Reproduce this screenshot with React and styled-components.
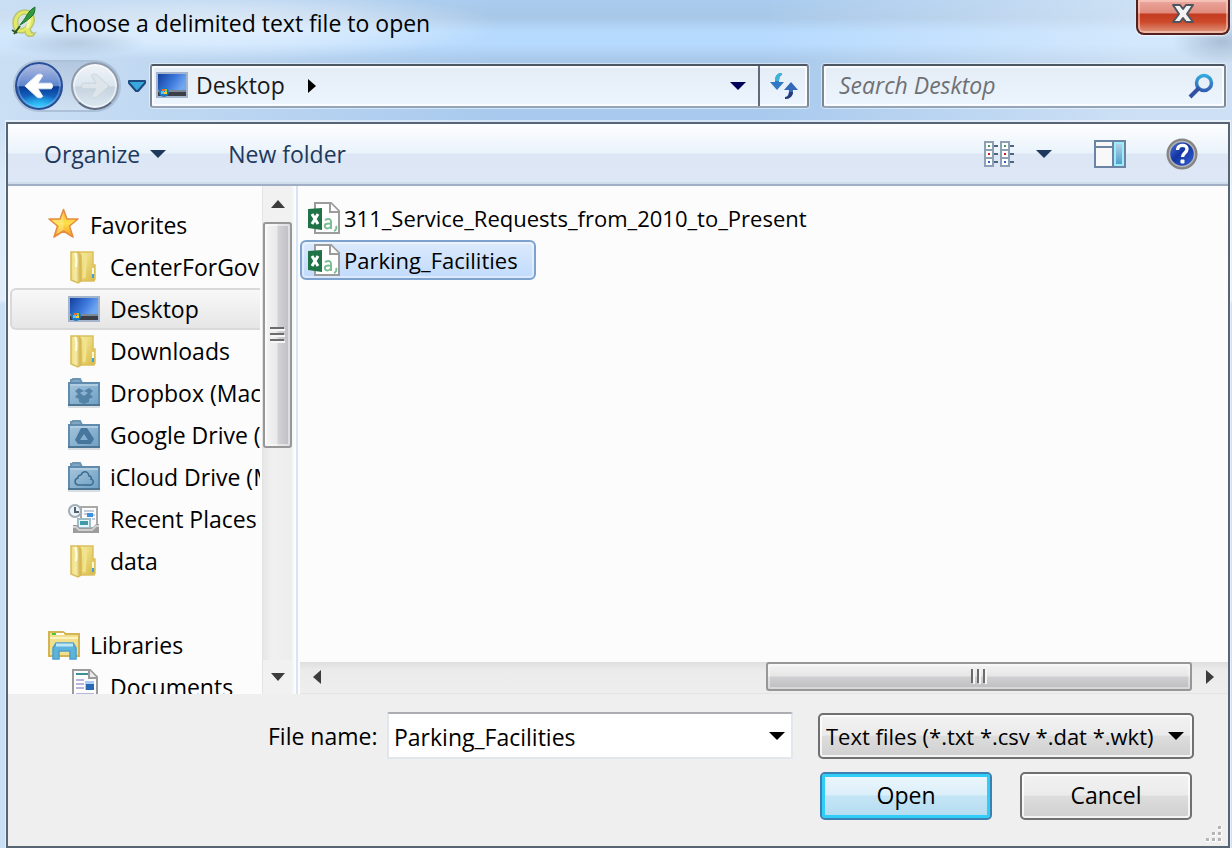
import React, { useState } from 'react';
import styled, { createGlobalStyle, css } from 'styled-components';

const Global = createGlobalStyle`
  *, *::before, *::after { box-sizing: border-box; }
  body { margin: 0; font-family: "Open Sans", "Noto Sans", sans-serif; font-size: 23px; line-height: 30px; color: #000; }
  button, input, select { font: inherit; color: inherit; margin: 0; }
  svg { display: block; flex: none; }
`;

/* ---------- window frame ---------- */

const Window = styled.div`
  height: 100vh;
  display: flex;
  flex-direction: column;
  padding: 0 2px 0 6px;
  overflow: hidden;
  background:
    radial-gradient(ellipse 70px 14px at 76px 43px, rgba(120, 140, 165, 0.3), transparent),
    radial-gradient(ellipse 50px 22px at 1222px 42px, rgba(120, 140, 165, 0.45), transparent),
    radial-gradient(ellipse 260px 34px at 240px 26px, rgba(255, 255, 255, 0.55), rgba(255, 255, 255, 0.3) 55%, transparent),
    linear-gradient(90deg, rgba(230, 240, 250, 0.55), transparent 40%, transparent 62%, rgba(240, 246, 252, 0.5) 92%),
    linear-gradient(180deg, #a9cbee 0, #a9c8e8 18px, #b6dafe 32px, #b6dafe 44px, #a9c9eb 60px, #a9caee 120px, #cfe3f8 180px, #dbe9f8 300px, #a9c9ec 304px, #a9c9ec 100%);
`;

const TitleBar = styled.header`
  display: flex;
  align-items: flex-start;
  height: 64px;
`;

const Title = styled.h1`
  flex: 1;
  display: flex;
  align-items: center;
  gap: 12px;
  height: 46px;
  margin: 0;
  padding-left: 4px;
  font-size: 23px;
  font-weight: 400;
`;

const CloseButton = styled.button`
  width: 94px;
  height: 35px;
  display: flex;
  justify-content: center;
  padding: 2px 0 0;
  border: 2px solid #54201f;
  border-top: 0;
  border-radius: 0 0 8px 8px;
  box-shadow: inset 0 0 0 2px rgba(255, 220, 210, 0.5), 0 1px 2px rgba(255, 255, 255, 0.8);
  background: linear-gradient(180deg, #eca89f 0, #e08a7c 13px, #c33a20 14px, #cd4a2c 22px, #e09a80 100%);
`;

const NavBar = styled.div`
  display: flex;
  align-items: center;
  height: 44px;
  margin-bottom: 14px;
  padding-right: 4px;
`;

const History = styled.div`
  display: flex;
  align-items: center;
  gap: 8px;
  width: 144px;
  flex: none;
  padding-left: 9px;
`;

const HistoryPair = styled.div`
  display: flex;
  gap: 8px;
  border-radius: 24px;
  box-shadow: 0 0 0 2px rgba(140, 160, 185, 0.45);
  background: linear-gradient(180deg, rgba(160, 180, 205, 0.5), rgba(215, 228, 242, 0.6));
`;

const RoundButton = styled.button`
  width: 48px;
  height: 48px;
  display: grid;
  place-items: center;
  padding: 0;
  border-radius: 50%;
  ${(p) =>
    p.$primary
      ? css`
          border: 2px solid #2a4f96;
          box-shadow: inset 0 0 0 2px rgba(150, 185, 235, 0.45);
          background:
            radial-gradient(ellipse 24px 14px at 50% 100%, #35d2ff, transparent),
            linear-gradient(180deg, #b5bde0 0, #5d86cf 49%, #0a3b94 52%, #1569c4 78%, #1fa4ee 100%);
        `
      : css`
          border: 2px solid #8e9aab;
          border-bottom-color: #5e6b80;
          box-shadow: inset 0 0 0 2px rgba(255, 255, 255, 0.5);
          background: linear-gradient(180deg, #f0f4f8 0, #dbe5ee 50%, #c5d3e0 52%, #dde8f0 100%);
        `}
`;

const IconButton = styled.button`
  display: grid;
  place-items: center;
  padding: 0;
  border: 0;
  background: none;
`;

const fieldFrame = css`
  display: flex;
  align-items: center;
  height: 44px;
  border: 2px solid #7c8794;
  border-top-color: #4d5763;
  border-bottom-color: #95a5b8;
  border-radius: 3px;
  box-shadow: 0 0 0 1px rgba(255, 255, 255, 0.45), inset 0 0 0 2px rgba(255, 255, 255, 0.75);
  background: linear-gradient(180deg, #e4ecf6 0, #e8f0f9 45%, #ecf4fe 100%);
`;

const AddressBar = styled.div`
  ${fieldFrame}
  flex: 1;
  min-width: 0;
  margin-right: 13px;
`;

const Crumb = styled.button`
  display: flex;
  align-items: center;
  gap: 8px;
  padding: 0 0 2px 4px;
  border: 0;
  background: none;
  color: #1a1a1a;
`;

const CrumbArrow = styled(IconButton)`
  width: 54px;
  height: 40px;
`;

const Spacer = styled.span`
  flex: 1;
`;

const AddressDrop = styled(IconButton)`
  width: 40px;
  height: 40px;
`;

const Refresh = styled(IconButton)`
  width: 49px;
  height: 40px;
  border-left: 2px solid #5f6b78;
`;

const SearchBox = styled.label`
  ${fieldFrame}
  flex: 0 1 404px;
  padding-right: 10px;
`;

const SearchInput = styled.input`
  flex: 1;
  min-width: 0;
  height: 38px;
  padding: 0 0 2px 15px;
  border: 0;
  outline: 0;
  background: none;
  &::placeholder {
    color: #6f7073;
    font-style: italic;
    opacity: 1;
  }
`;

/* ---------- client area ---------- */

const Client = styled.div`
  flex: 1;
  min-height: 0;
  display: flex;
  flex-direction: column;
  border: 2px solid #566474;
  box-shadow: 0 -1px 0 1px rgba(255, 255, 255, 0.5);
  background: #efefef;
`;

const Toolbar = styled.div`
  display: flex;
  align-items: center;
  height: 62px;
  flex: none;
  padding: 0 30px 0 36px;
  border-bottom: 2px solid #a0afc5;
  box-shadow: inset 0 -2px 0 #cfdcec;
  background: linear-gradient(180deg, #fdfeff 0, #eaf3fb 29px, #dce6f4 30px, #dde7f5 100%);
  color: #1e395b;
`;

const ToolButton = styled.button`
  display: flex;
  align-items: center;
  gap: 10px;
  padding: 0;
  margin-right: ${(p) => p.$after}px;
  border: 0;
  background: none;
`;

const Browser = styled.div`
  flex: 1;
  min-height: 0;
  display: flex;
  background: #fcfcfc;
`;

const Sidebar = styled.nav`
  width: 252px;
  flex: none;
  overflow: hidden;
  padding: 18px 0 0 2px;
`;

const Tree = styled.ul`
  list-style: none;
  margin: 0;
  padding: 0;
`;

const TreeGap = styled.li`
  height: 42px;
`;

const TreeLink = styled.a`
  display: flex;
  align-items: center;
  gap: 10px;
  height: 42px;
  padding-left: ${(p) => (p.$root ? 36 : 56)}px;
  border: 2px solid transparent;
  border-right: 0;
  border-radius: 6px 0 0 6px;
  color: #000;
  text-decoration: none;
  white-space: nowrap;
  ${(p) =>
    p.$selected &&
    css`
      border-color: #d9d9d9;
      background: linear-gradient(180deg, #f8f8f8, #e6e6e6);
    `}
`;

const VScroll = styled.div`
  display: flex;
  flex-direction: column;
  width: 32px;
  margin-left: 2px;
  flex: none;
  border-left: 1px solid #e3e3e3;
  border-right: 2px solid #f6f6f6;
  background: linear-gradient(90deg, #e6e6e6, #f0f0f0 30%, #ededed);
`;

const VButton = styled(IconButton)`
  height: ${(p) => p.$size}px;
  background: #f1f1f1;
`;

const VThumb = styled.div`
  flex: 222 1 0;
  display: grid;
  place-items: center;
  border: 2px solid #979797;
  border-radius: 3px;
  box-shadow: inset 0 0 0 2px rgba(255, 255, 255, 0.5);
  background: linear-gradient(90deg, #f5f5f5, #e9e9eb 48%, #d3d3d7 52%, #bcbcc2);
`;

const VTrack = styled.div`
  flex: 212 1 0;
`;

const Files = styled.main`
  flex: 1;
  min-width: 0;
  display: flex;
  flex-direction: column;
  margin-left: 2px;
  border-left: 2px solid #d6e5f5;
`;

const FileList = styled.ul`
  flex: 1;
  list-style: none;
  margin: 0;
  padding: 12px 0 0 2px;
`;

const FileItem = styled.button`
  display: flex;
  align-items: center;
  gap: 4px;
  height: 40px;
  margin-bottom: 2px;
  padding: 0 16px 0 6px;
  font-size: 22px;
  border: 2px solid ${(p) => (p.$selected ? '#7da2ce' : 'transparent')};
  border-radius: 6px;
  box-shadow: ${(p) => (p.$selected ? 'inset 0 0 0 2px rgba(255,255,255,0.4)' : 'none')};
  background: ${(p) => (p.$selected ? 'linear-gradient(180deg, #dceafc, #c1dbfc)' : 'none')};
`;

const HScroll = styled.div`
  display: flex;
  height: 32px;
  margin-left: 2px;
  padding-bottom: 2px;
  border-bottom: 1px solid #e4e4e4;
  background: linear-gradient(180deg, #dedede, #ebebeb 8px, #eee);
`;

const HButton = styled(IconButton)`
  width: ${(p) => p.$size}px;
`;

const HTrack = styled.div`
  flex: 432 1 0;
`;

const HThumb = styled.div`
  flex: 422 1 0;
  display: grid;
  place-items: center;
  border: 2px solid #979797;
  border-radius: 3px;
  box-shadow: inset 0 0 0 2px rgba(255, 255, 255, 0.4);
  background: linear-gradient(180deg, #f4f4f4, #e6e6e7 48%, #d0d0d2 52%, #bdbdc1);
`;

/* ---------- bottom form ---------- */

const Footer = styled.form`
  position: relative;
  flex: none;
  display: flex;
  flex-direction: column;
  gap: 13px;
  padding: 18px 34px 26px 260px;
`;

const FieldRow = styled.div`
  display: flex;
  align-items: center;
`;

const NameLabel = styled.label`
  width: 119px;
  flex: none;
`;

const NameBox = styled.div`
  flex: 1;
  min-width: 0;
  display: flex;
  align-items: center;
  height: 47px;
  margin-right: 25px;
  border: 2px solid #e2e7ee;
  border-top-color: #abadb3;
  border-radius: 2px;
  background: #fff;
`;

const NameInput = styled.input`
  flex: 1;
  min-width: 0;
  height: 42px;
  padding: 2px 0 0 5px;
  border: 0;
  outline: 0;
  background: none;
`;

const NameDrop = styled(IconButton)`
  width: 28px;
  height: 40px;
`;

const raised = css`
  border: 2px solid #707070;
  border-radius: 5px;
  box-shadow: inset 0 0 0 2px rgba(255, 255, 255, 0.75);
  background: linear-gradient(180deg, #f2f2f2 0, #ebebeb 48%, #dddddd 50%, #cfcfcf 100%);
`;

const TypeBox = styled.div`
  ${raised}
  flex: 0 1 376px;
  display: flex;
  align-items: center;
  height: 46px;
  padding-right: 8px;
`;

const TypeSelect = styled.select`
  flex: 1;
  min-width: 0;
  height: 42px;
  padding: 0 0 0 6px;
  appearance: none;
  border: 0;
  outline: 0;
  background: none;
  font-size: 22px;
  white-space: nowrap;
`;

const Actions = styled.div`
  display: flex;
  justify-content: flex-end;
  gap: 28px;
  padding-right: 2px;
`;

const ActionButton = styled.button`
  ${raised}
  width: 172px;
  height: 48px;
  padding: 0 0 2px;
  ${(p) =>
    p.$default &&
    css`
      border-color: #3c7fb1;
      box-shadow: inset 0 0 0 3px #2fcdf8;
      background: linear-gradient(180deg, #edf6fb 0, #dceffa 47%, #c4e5f6 50%, #b3dbf0 100%);
    `}
`;

const SizeGrip = styled.svg`
  position: absolute;
  right: 4px;
  bottom: 2px;
`;

/* ---------- drawings ---------- */

const Triangle = ({ dir = 'down', color = '#000', w = 16, h = 8 }) => {
  const d = {
    down: `M0 0H${w}L${w / 2} ${h}Z`,
    up: `M0 ${h}H${w}L${w / 2} 0Z`,
    right: `M0 0L${w} ${h / 2}L0 ${h}Z`,
    left: `M${w} 0L0 ${h / 2}L${w} ${h}Z`,
  }[dir];
  return (
    <svg width={w} height={h} viewBox={`0 0 ${w} ${h}`} aria-hidden="true">
      <path d={d} fill={color} />
    </svg>
  );
};

const AppIcon = () => (
  <svg width="28" height="34" viewBox="0 0 28 34" aria-hidden="true">
    <path
      d="M15 4C8 4 3 10 3 17c0 6 3 10 8 10 1 0 3 0 4-1 0 3 3 5 8 4l2-3c-3 1-4-1-5-4 3-3 5-7 4-12-1-4-4-7-9-7Z"
      fill="#e2ea63"
      stroke="#b9c27a"
      strokeWidth="1.5"
    />
    <path d="M14 8c-5 1-7 6-6 10 0 3 1 5 3 5 5-1 9-7 8-11 0-3-2-4-5-4Z" fill="#d5e2e6" stroke="#b4c05a" />
    <path d="M18 8c2 3 2 9-1 14" fill="none" stroke="#f6f8a8" strokeWidth="3" />
    <path d="M25 1c-5 3-6 5-8 8-2 4-5 7-7 10 5-3 8-5 11-8 3-2 4-5 4-10Z" fill="#2f9a39" stroke="#1d6e2a" />
    <path d="M2 24l5 3M4 28l6-8" stroke="#2b5724" strokeWidth="2" />
  </svg>
);

const CloseGlyph = () => (
  <svg width="24" height="24" viewBox="0 0 24 24" aria-hidden="true">
    <path d="M2 3h7l3 4 3-4h7l-6 9 6 8h-7l-3-4-3 4H2l6-8Z" fill="#f3f3f3" stroke="#50545f" strokeWidth="2" strokeLinejoin="round" />
  </svg>
);

const ArrowGlyph = ({ right }) => (
  <svg width="32" height="30" viewBox="0 0 34 32" aria-hidden="true">
    <g transform={right ? 'matrix(-1 0 0 1 34 0)' : undefined}>
      <path
        d="M2 16 15 4c2-1 5-1 6 1l-5 8h14c2 1 2 5 0 6H16l5 8c-1 2-4 2-6 1Z"
        fill={right ? '#dde5ea' : '#fff'}
        stroke={right ? '#c6d3dd' : '#e4edf8'}
        strokeLinejoin="round"
      />
    </g>
  </svg>
);

const HistoryArrow = () => (
  <svg width="20" height="14" viewBox="0 0 20 14" aria-hidden="true">
    <path d="M2 2h16v2l-7 8H9L2 4Z" fill="#39a8dc" stroke="#1d4a80" strokeWidth="2" strokeLinejoin="round" />
  </svg>
);

const DesktopIcon = () => (
  <svg width="32" height="28" viewBox="0 0 32 28" aria-hidden="true">
    <defs>
      <linearGradient id="screen" x1="0" y1="0" x2="1" y2="0.4">
        <stop offset="0" stopColor="#12409c" />
        <stop offset="0.6" stopColor="#3d78dc" />
        <stop offset="1" stopColor="#6ea6f0" />
      </linearGradient>
    </defs>
    <path d="M0 1h32v26H0Z" fill="#a3b4cc" />
    <path d="M2 3h28v17H2Z" fill="url(#screen)" />
    <path d="M2 19h28v2H2Z" fill="#7d8795" />
    <path d="M2 21h28v4H2Z" fill="#3c3f45" />
    <circle cx="8" cy="21" r="5" fill="#1d78c4" />
    <path d="M6 18h3v2H6Z" fill="#ef6a3a" />
    <path d="M9 18h2v3H9Z" fill="#8ed04a" />
    <path d="M5 20h3v3H5Z" fill="#59c4f4" />
    <path d="M8 21h3v2H8Z" fill="#fbd33c" />
  </svg>
);

const RefreshIcon = () => (
  <svg width="28" height="28" viewBox="0 0 28 28" aria-hidden="true">
    <path d="M12 1v2c-2 0-3 3-3 7h5l-7 8-7-8h5C5 4 7 1 12 1Z" fill="#3079c4" />
    <path d="M12 1v2c-2 0-3 3-3 6H5c0-5 2-8 7-8Z" fill="#3cb4dc" />
    <path d="M15 27v-2c3 0 4-3 4-7h-5l7-8 7 8h-5c0 6-3 9-8 9Z" fill="#3568b6" />
    <path d="M15 27v-2c3 0 4-2 4-5h4c0 4-3 7-8 7Z" fill="#263c78" />
  </svg>
);

const SearchIcon = () => (
  <svg width="26" height="26" viewBox="0 0 26 26" aria-hidden="true">
    <defs>
      <linearGradient id="lens" x1="0" y1="0" x2="0" y2="1">
        <stop offset="0" stopColor="#33a8dc" />
        <stop offset="1" stopColor="#3560b2" />
      </linearGradient>
    </defs>
    <circle cx="16" cy="10" r="7.5" fill="none" stroke="url(#lens)" strokeWidth="3.5" />
    <path d="M11 15 2 24" stroke="#2f53a0" strokeWidth="4" />
  </svg>
);

const ViewIcon = () => (
  <svg width="32" height="28" viewBox="0 0 32 28" aria-hidden="true">
    {[0, 16].map((x) => (
      <g key={x}>
        {['#3f9a5a', '#cf1f1f', '#2a62c8'].map((c, i) => (
          <g key={c}>
            <rect x={x + 1} y={i * 8 + 2} width="8" height="8" fill="#fff" stroke="#8da0b4" strokeWidth="2" />
            <rect x={x + 4} y={i * 8 + 5} width="2" height="2" fill={c} />
            <rect x={x + 10} y={i * 8 + 5} width="4" height="2" fill="#4e6580" />
          </g>
        ))}
      </g>
    ))}
  </svg>
);

const PaneIcon = () => (
  <svg width="32" height="28" viewBox="0 0 32 28" aria-hidden="true">
    <defs>
      <linearGradient id="pane" x1="0" y1="0" x2="0" y2="1">
        <stop offset="0" stopColor="#b5d4e8" />
        <stop offset="1" stopColor="#4f9dcc" />
      </linearGradient>
    </defs>
    <rect x="1" y="1" width="30" height="26" fill="#f8f8f8" stroke="#6c84a4" strokeWidth="2" />
    <path d="M2 7h17M19 2v24" stroke="#6c84a4" strokeWidth="2" />
    <rect x="21" y="3" width="8" height="22" fill="url(#pane)" stroke="#9cecf8" strokeWidth="2" />
  </svg>
);

const HelpIcon = () => (
  <svg width="32" height="32" viewBox="0 0 32 32" aria-hidden="true">
    <defs>
      <linearGradient id="help" x1="0" y1="0" x2="1" y2="1">
        <stop offset="0" stopColor="#5c7fe0" />
        <stop offset="0.45" stopColor="#1236a2" />
        <stop offset="1" stopColor="#3c66dc" />
      </linearGradient>
    </defs>
    <circle cx="16" cy="16" r="14" fill="url(#help)" stroke="#858585" strokeWidth="3" />
    <circle cx="16" cy="16" r="12.5" fill="none" stroke="#b4b4b4" strokeWidth="1.5" />
    <path d="M11.500 12c0-6 9.500-6 9.500-1 0 4-4.500 4-4.500 8" fill="none" stroke="#fff" strokeWidth="3.400" />
    <rect x="14.500" y="21.500" width="4" height="4" rx="1" fill="#fff" />
  </svg>
);

const StarIcon = () => (
  <svg width="32" height="34" viewBox="0 0 32 34" aria-hidden="true">
    <defs>
      <linearGradient id="star" x1="0" y1="0" x2="0" y2="1">
        <stop offset="0" stopColor="#ffae38" />
        <stop offset="0.5" stopColor="#ffe04a" />
        <stop offset="1" stopColor="#f59a22" />
      </linearGradient>
    </defs>
    <path d="M15.500 1.500 19 11H30l-8.500 7L25 29l-9.500-6L6 29l3.500-11L1 11h11Z" fill="url(#star)" stroke="#e58a3e" strokeWidth="1.500" strokeLinejoin="round" />
    <path d="M15.500 5v17l-7 4 3-8-7-5.500 8-.5Z" fill="#fff6a0" opacity="0.400" />
  </svg>
);

const FolderIcon = () => (
  <svg width="32" height="36" viewBox="0 0 32 36" aria-hidden="true">
    <defs>
      <linearGradient id="folder" x1="0" y1="0" x2="1" y2="1">
        <stop offset="0" stopColor="#f8f0a4" />
        <stop offset="1" stopColor="#d9b843" />
      </linearGradient>
      <linearGradient id="flap" x1="0" y1="0" x2="1" y2="0">
        <stop offset="0" stopColor="#eedc7c" />
        <stop offset="0.5" stopColor="#f7eca6" />
        <stop offset="1" stopColor="#c9a540" />
      </linearGradient>
    </defs>
    <path d="M10 3h15v13h2v14l-1 2H12Z" fill="url(#folder)" stroke="#dcc05c" strokeWidth="1.500" />
    <path d="M3 3h5c3 0 5 2 5 5v24l-3 2-7-3Z" fill="url(#flap)" stroke="#d8bc58" strokeWidth="1.500" />
    <path d="M7 4c2 4 2 7 1 14" fill="none" stroke="#fffde4" strokeWidth="2" />
    <path d="M17 5c1 5 0 13-1 24" fill="none" stroke="#f2e48e" strokeWidth="3" />
    <path d="M25 19v10" stroke="#fff8dc" strokeWidth="2" />
    <path d="M25 25v4" stroke="#3ea0dc" strokeWidth="2" />
  </svg>
);

const marks = {
  dropbox: (
    <path
      d="m7 14 4-3 5 3 5-3 4 3-3 3 3 3-4 2v3l-5 2-5-2v-3l-4-2 3-3Zm5 2 4 3 4-3-4-2Z"
      fill="#4a7aa0"
      fillRule="evenodd"
      opacity="0.850"
    />
  ),
  google: <path d="M13 9h6l7 11-3 5H10l-3-4Zm3 6-4 6h8Z" fill="#3f7097" fillRule="evenodd" opacity="0.900" />,
  icloud: (
    <path d="M10 24c-4-1-4-6 0-7 0-2 1-3 3-3 2-5 7-4 8 1 2 0 3 2 2 3 3 1 3 5 0 6Z" fill="none" stroke="#3d6b8e" strokeWidth="1.500" />
  ),
};

const CloudFolder = ({ mark }) => (
  <svg width="32" height="32" viewBox="0 0 32 32" aria-hidden="true">
    <defs>
      <linearGradient id="blueFolder" x1="0" y1="0" x2="1" y2="1">
        <stop offset="0" stopColor="#a5c5dc" />
        <stop offset="1" stopColor="#6ea0c4" />
      </linearGradient>
    </defs>
    <path d="M3 6V3h1l1-1h7l2 4Z" fill="#7fa6c2" stroke="#6d95b2" strokeWidth="2" />
    <path d="M1 6h30v22H1Z" fill="url(#blueFolder)" stroke="#5f8cae" strokeWidth="2" />
    <path d="M2 8h28" stroke="#b0cde1" strokeWidth="2" />
    <path d="M0 28h32" stroke="#4d7594" strokeWidth="2" />
    <path d="M0 30h32" stroke="#d9dee2" strokeWidth="2" />
    {marks[mark]}
  </svg>
);

const RecentIcon = () => (
  <svg width="32" height="32" viewBox="0 0 32 32" aria-hidden="true">
    <path d="M13 4h16v21H13Z" fill="#fbfbfb" stroke="#a9a9a9" strokeWidth="2" />
    <path d="M16 8h10M16 11h3M24 12h3M24 16h3" stroke="#c3cad8" strokeWidth="2" />
    <path d="M19 10h6v4h-6Z" fill="#3d8fe0" />
    <path d="M10 16h12v9H10Z" fill="#e9f6f9" stroke="#9dbcc8" strokeWidth="2" />
    <path d="M12 18h8v4h-8Z" fill="#3e9aa6" />
    <path d="M5 22h4l3 3h12l4-4h3v9H5Z" fill="#9c9c9c" />
    <path d="M5 24h3l3 3h13l4-4h3" fill="none" stroke="#cfcfcf" strokeWidth="2" />
    <circle cx="7" cy="8" r="6" fill="#eef3f7" stroke="#a3adb5" strokeWidth="2" />
    <path d="M7 4v5h4" fill="none" stroke="#4d6175" strokeWidth="2" />
  </svg>
);

const LibrariesIcon = () => (
  <svg width="32" height="30" viewBox="0 0 32 30" aria-hidden="true">
    <path d="M1 2h14l3 2h13v22H1Z" fill="#f1df8c" stroke="#d2b454" strokeWidth="2" />
    <path d="M4 4h4" stroke="#4ecb2a" strokeWidth="2" />
    <path d="M8 4h8" stroke="#fff" strokeWidth="2" />
    <path d="M2 8h28" stroke="#faf2c0" strokeWidth="2" />
    <path d="M8 13h17l3 5v11h-6v-8H11v8H5V18Z" fill="#5cb4dd" stroke="#4b9fcb" strokeWidth="1.500" />
    <path d="M8 15h17" stroke="#c0e7f7" strokeWidth="3" />
  </svg>
);

const DocumentsIcon = () => (
  <svg width="32" height="36" viewBox="0 0 32 36" aria-hidden="true">
    <path d="M5 1h17l7 7v27H5Z" fill="#fcfcfc" stroke="#9b9b9b" strokeWidth="2" />
    <path d="M21 1v8h8" fill="#ececec" stroke="#9b9b9b" strokeWidth="2" />
    <path d="M8 5h12" stroke="#3d8f9b" strokeWidth="2" />
    <path d="M8 11h8M8 15h8M8 19h8M8 25h18M8 29h18" stroke="#b9b6dc" strokeWidth="2" />
    <rect x="17" y="12" width="9" height="9" fill="#a9cdf2" />
    <path d="M18 15h8v6h-8Z" fill="#2868b4" />
  </svg>
);

const CsvIcon = () => (
  <svg width="32" height="32" viewBox="0 0 32 32" aria-hidden="true">
    <path d="M7 1h16l8 8v22H7Z" fill="#fff" stroke="#9c9c9c" strokeWidth="2" />
    <path d="M22 1v9h9" fill="#fff" stroke="#9c9c9c" strokeWidth="2" />
    <path d="M0 7l14-1v22L0 26Z" fill="#1f7346" />
    <path d="M4 12l6 10M10 12 4 22" stroke="#fff" strokeWidth="3" />
    <path d="M17 18c4-2 6-1 6 2v7m0-5c-4-1-7 0-6 3 1 2 5 2 6-1M28 24c1 2 0 4-2 5" fill="none" stroke="#7cbf97" strokeWidth="2" />
  </svg>
);

const Grip = ({ vertical }) => (
  <svg width="16" height="16" viewBox="0 0 16 16" aria-hidden="true">
    <path d={vertical ? 'M1 0v14M7 0v14M13 0v14' : 'M0 1h14M0 7h14M0 13h14'} stroke="#6c6c6c" strokeWidth="2" />
    <path d={vertical ? 'M3 1v14M9 1v14M15 1v14' : 'M1 3h14M1 9h14M1 15h14'} stroke="#f6f6f6" strokeWidth="2" />
  </svg>
);

/* ---------- data ---------- */

const places = [
  { label: 'Favorites', icon: <StarIcon />, root: true },
  { label: 'CenterForGovernment', icon: <FolderIcon /> },
  { label: 'Desktop', icon: <DesktopIcon />, selected: true },
  { label: 'Downloads', icon: <FolderIcon /> },
  { label: 'Dropbox (Mac)', icon: <CloudFolder mark="dropbox" /> },
  { label: 'Google Drive (Mac)', icon: <CloudFolder mark="google" /> },
  { label: 'iCloud Drive (Mac)', icon: <CloudFolder mark="icloud" /> },
  { label: 'Recent Places', icon: <RecentIcon /> },
  { label: 'data', icon: <FolderIcon /> },
  null,
  { label: 'Libraries', icon: <LibrariesIcon />, root: true },
  { label: 'Documents', icon: <DocumentsIcon /> },
];

const files = ['311_Service_Requests_from_2010_to_Present', 'Parking_Facilities'];

export default function App() {
  const [file, setFile] = useState('Parking_Facilities');

  return (
    <>
      <Global />
      <Window>
        <TitleBar>
          <Title>
            <AppIcon />
            Choose a delimited text file to open
          </Title>
          <CloseButton aria-label="Close">
            <CloseGlyph />
          </CloseButton>
        </TitleBar>

        <NavBar>
          <History>
            <HistoryPair>
              <RoundButton $primary aria-label="Back">
                <ArrowGlyph />
              </RoundButton>
              <RoundButton aria-label="Forward">
                <ArrowGlyph right />
              </RoundButton>
            </HistoryPair>
            <IconButton aria-label="Recent pages">
              <HistoryArrow />
            </IconButton>
          </History>
          <AddressBar>
            <Crumb>
              <DesktopIcon />
              Desktop
            </Crumb>
            <CrumbArrow aria-label="Show subfolders">
              <Triangle dir="right" w={8} h={14} />
            </CrumbArrow>
            <Spacer />
            <AddressDrop aria-label="Previous locations">
              <Triangle color="#000058" />
            </AddressDrop>
            <Refresh aria-label="Refresh">
              <RefreshIcon />
            </Refresh>
          </AddressBar>
          <SearchBox>
            <SearchInput placeholder="Search Desktop" aria-label="Search Desktop" />
            <SearchIcon />
          </SearchBox>
        </NavBar>

        <Client>
          <Toolbar>
            <ToolButton $after={62}>
              Organize
              <Triangle color="#1e395b" />
            </ToolButton>
            <ToolButton $after={0}>New folder</ToolButton>
            <Spacer />
            <ToolButton $after={20} aria-label="Change view">
              <ViewIcon />
            </ToolButton>
            <ToolButton $after={42} aria-label="More view options">
              <Triangle color="#1e395b" />
            </ToolButton>
            <ToolButton $after={40} aria-label="Preview pane">
              <PaneIcon />
            </ToolButton>
            <ToolButton $after={0} aria-label="Help">
              <HelpIcon />
            </ToolButton>
          </Toolbar>

          <Browser>
            <Sidebar>
              <Tree>
                {places.map((p, i) =>
                  p ? (
                    <li key={p.label}>
                      <TreeLink href="#" $root={p.root} $selected={p.selected}>
                        {p.icon}
                        {p.label}
                      </TreeLink>
                    </li>
                  ) : (
                    <TreeGap key={i} />
                  )
                )}
              </Tree>
            </Sidebar>
            <VScroll>
              <VButton $size={36} aria-label="Scroll up">
                <Triangle dir="up" color="#3c3c3c" w={14} />
              </VButton>
              <VThumb>
                <Grip />
              </VThumb>
              <VTrack />
              <VButton $size={34} aria-label="Scroll down">
                <Triangle color="#3c3c3c" w={14} />
              </VButton>
            </VScroll>
            <Files>
              <FileList>
                {files.map((f) => (
                  <li key={f}>
                    <FileItem $selected={f === file} onClick={() => setFile(f)}>
                      <CsvIcon />
                      {f}
                    </FileItem>
                  </li>
                ))}
              </FileList>
              <HScroll>
                <HButton $size={34} aria-label="Scroll left">
                  <Triangle dir="left" color="#3c3c3c" w={8} h={14} />
                </HButton>
                <HTrack />
                <HThumb>
                  <Grip vertical />
                </HThumb>
                <HButton $size={36} aria-label="Scroll right">
                  <Triangle dir="right" color="#3c3c3c" w={8} h={14} />
                </HButton>
              </HScroll>
            </Files>
          </Browser>

          <Footer onSubmit={(e) => e.preventDefault()}>
            <FieldRow>
              <NameLabel htmlFor="file-name">File name:</NameLabel>
              <NameBox>
                <NameInput id="file-name" value={file} onChange={(e) => setFile(e.target.value)} />
                <NameDrop type="button" aria-label="Recent file names">
                  <Triangle />
                </NameDrop>
              </NameBox>
              <TypeBox>
                <TypeSelect aria-label="File type">
                  <option>Text files (*.txt *.csv *.dat *.wkt)</option>
                </TypeSelect>
                <Triangle />
              </TypeBox>
            </FieldRow>
            <Actions>
              <ActionButton $default>Open</ActionButton>
              <ActionButton type="button">Cancel</ActionButton>
            </Actions>
            <SizeGrip width="18" height="18" viewBox="0 0 18 18" aria-hidden="true">
              <path d="M12 0h4v4h-4ZM6 6h4v4H6ZM12 6h4v4h-4ZM0 12h4v4H0ZM6 12h4v4H6ZM12 12h4v4h-4Z" fill="#fff" />
              <path d="M12 0h3v3h-3ZM6 6h3v3H6ZM12 6h3v3h-3ZM0 12h3v3H0ZM6 12h3v3H6ZM12 12h3v3h-3Z" fill="#b5b5b5" />
            </SizeGrip>
          </Footer>
        </Client>
      </Window>
    </>
  );
}
